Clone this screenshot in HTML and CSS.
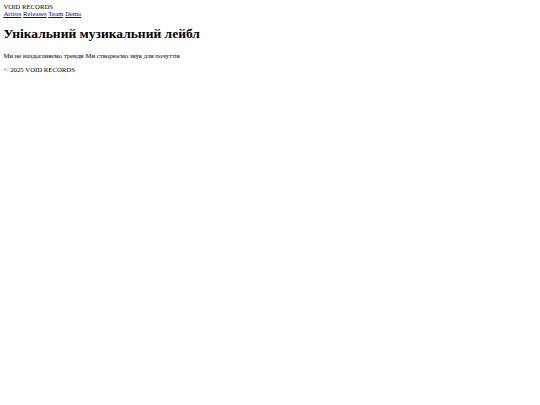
FILE: index.html
```html
<!DOCTYPE html>
<html lang="uk">
<head>
<meta charset="utf-8">
<title>VOID RECORDS</title>
<link rel="stylesheet" href="styles.css">
</head>
<body>
<header class="site-header">
  <div class="logo">VOID RECORDS</div>
  <nav class="nav"><a href="#">Artists</a> <a href="#">Releases</a> <a href="#">Team</a> <a href="#">Demo</a></nav>
</header>
<main class="main">
  <h1 class="title">Унікальний музикальний лейбл</h1>
  <p class="lead">Ми не наздоганяємо тренди Ми створюємо звук для почуттів</p>
</main>
<footer class="site-footer">
  <p class="copy">© 2025 VOID RECORDS</p>
</footer>
</body>
</html>
```
FILE: styles.css
```css
html {
  background: #fff;
}
body {
  margin: 3.375px;
  font-family: "Liberation Serif", "Times New Roman", serif;
  font-size: 6.75px;
  color: #000;
}
.nav a {
  color: #0000ee;
  text-decoration: underline;
}
.title {
  font-size: 13.5px;
  font-weight: bold;
  margin: 9.05px 0 10px;
}
.lead {
  margin: 6.75px 0;
}
.copy {
  margin: 6.75px 0;
}
```
